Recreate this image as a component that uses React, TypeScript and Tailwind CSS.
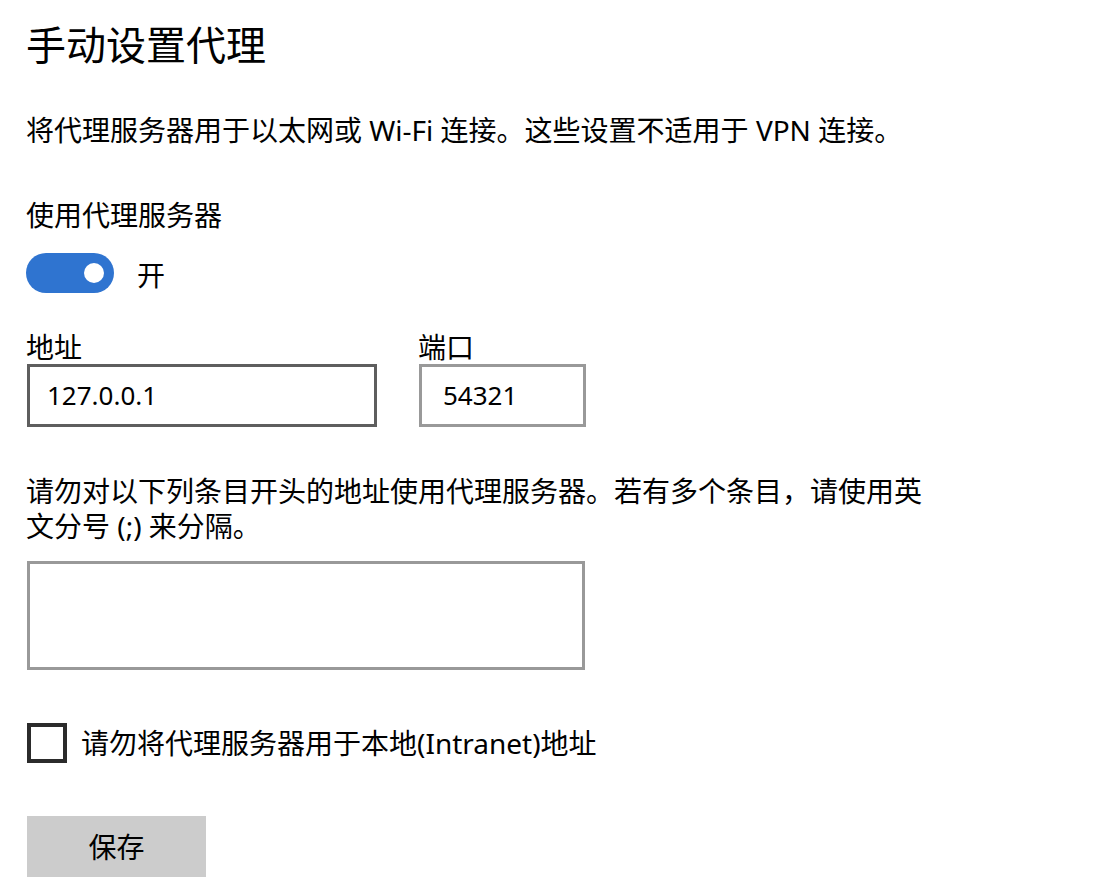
import React from "react";

const font = "font-['Noto_Sans','Noto_Sans_CJK_SC',sans-serif]";

export default function App() {
  return (
    <div className={`min-h-[888px] w-full bg-white pl-[26px] text-black ${font}`}>
      <div className="flex flex-col">
        <h1 className="mt-[21px] text-[40px] leading-[48px] font-normal">手动设置代理</h1>

        <p className="mt-[43px] text-[28px] leading-[36px]">
          将代理服务器用于以太网或 Wi-Fi 连接。这些设置不适用于 VPN 连接。
        </p>

        <p className="mt-[49px] text-[28px] leading-[36px]">使用代理服务器</p>

        <div className="mt-[20px] flex items-center">
          <div className="flex h-[40px] w-[88px] items-center justify-end rounded-full bg-[#2f74d0] pr-[10px]">
            <div className="h-[20px] w-[20px] rounded-full bg-white" />
          </div>
          <span className="ml-[23px] mt-[4px] text-[28px] leading-[36px]">开</span>
        </div>

        <div className="mt-[40px] flex gap-[41px]">
          <div className="flex flex-col">
            <span className="text-[28px] leading-[28px]">地址</span>
            <div className="mt-[3px] ml-[1px] flex h-[63px] w-[350px] items-center border-[3px] border-[#5e5e5e] pl-[17px] text-[26px]">
              127.0.0.1
            </div>
          </div>
          <div className="flex flex-col">
            <span className="text-[28px] leading-[28px]">端口</span>
            <div className="mt-[3px] ml-[1px] flex h-[63px] w-[167px] items-center border-[3px] border-[#999999] pl-[21px] text-[26px]">
              54321
            </div>
          </div>
        </div>

        <p className="mt-[47px] w-[905px] text-[28px] leading-[35px]">
          请勿对以下列条目开头的地址使用代理服务器。若有多个条目，请使用英文分号 (;) 来分隔。
        </p>

        <div className="mt-[17px] ml-[1px] h-[109px] w-[558px] border-[3px] border-[#999999]" />

        <div className="mt-[53px] flex items-center">
          <div className="ml-[1px] h-[40px] w-[40px] border-[4px] border-[#2b2b2b]" />
          <span className="ml-[14px] text-[28px] leading-[36px]">请勿将代理服务器用于本地(Intranet)地址</span>
        </div>

        <button className="mt-[53px] ml-[1px] flex h-[61px] w-[179px] items-center justify-center bg-[#cccccc] text-[28px] leading-[36px]">
          保存
        </button>
      </div>
    </div>
  );
}
